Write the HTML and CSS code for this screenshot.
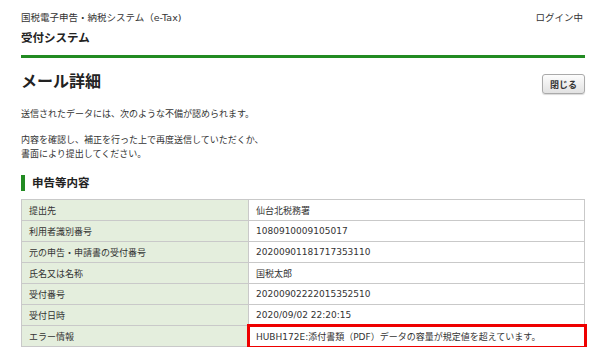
FILE: index.html
```html
<!DOCTYPE html>
<html lang="ja">
<head>
<meta charset="utf-8"/>
<meta content="width=device-width, initial-scale=1.0" name="viewport"/>
<title>メール詳細 - 受付システム</title>
<link rel="stylesheet" href="styles.css">
</head>
<body>
<div class="page">
<!-- ヘッダー -->
<div class="site-header">
<div class="header-top">
<span class="system-name">国税電子申告・納税システム（e-Tax)</span>
<span class="login-status">ログイン中</span>
</div>
<div class="header-title">受付システム</div>
</div>
<!-- タイトル -->
<div class="title-row">
<h1>メール詳細</h1>
<button class="btn-close" type="button">閉じる</button>
</div>
<p class="message">送信されたデータには、次のような不備が認められます。</p>
<p class="message">内容を確認し、補正を行った上で再度送信していただくか、<br/>書面により提出してください。</p>
<!-- 申告等内容 -->
<h2 class="section-title">申告等内容</h2>
<table class="detail-table">
<tr><th>提出先</th><td>仙台北税務署</td></tr>
<tr><th>利用者識別番号</th><td>1080910009105017</td></tr>
<tr><th>元の申告・申請書の受付番号</th><td>20200901181717353110</td></tr>
<tr><th>氏名又は名称</th><td>国税太郎</td></tr>
<tr><th>受付番号</th><td>20200902222015352510</td></tr>
<tr><th>受付日時</th><td>2020/09/02 22:20:15</td></tr>
<tr><th>エラー情報</th><td class="error-cell">HUBH172E:添付書類（PDF）データの容量が規定値を超えています。</td></tr>
</table>
</div>
</body>
</html>
```

FILE: styles.css
```css
:root {
  --color-verde: #228b22;
  --color-fondo-label: #e4eedd;
  --color-borde: #c9c9c9;
  --color-texto: #333;
}

* {
  box-sizing: border-box;
  font-family: 'DejaVu Sans', 'Noto Sans CJK JP', sans-serif;
}

body {
  margin: 0;
  background: #fff;
  color: var(--color-texto);
}

.page {
  padding: 0 21px;
}

.site-header {
  padding-top: 10px;
  padding-bottom: 9px;
  border-bottom: 3px solid var(--color-verde);
}

.header-top {
  display: flex;
  justify-content: space-between;
  font-size: 9.5px;
  line-height: 16px;
  padding-right: 2px;
}

.header-title {
  margin-top: 4px;
  font-size: 11.5px;
  font-weight: bold;
  line-height: 16px;
  color: #222;
}

.title-row {
  display: flex;
  justify-content: space-between;
  align-items: center;
  margin-top: 12px;
  height: 24px;
}

h1 {
  margin: 0;
  font-size: 16px;
  line-height: 24px;
  color: #222;
}

.btn-close {
  margin-top: 4px;
  width: 43px;
  height: 20px;
  padding: 0;
  font-size: 9px;
  font-weight: bold;
  color: #333;
  background: linear-gradient(#fdfdfd, #e2e2e2);
  border: 1px solid #aaa;
  border-radius: 3px;
  box-shadow: 0 1px 1px rgba(0,0,0,0.15);
}

.message {
  margin: 13px 0 0;
  font-size: 9px;
  line-height: 14px;
}

.message + .message {
  margin-top: 12px;
}

.section-title {
  margin: 14px 0 0;
  font-size: 11.5px;
  line-height: 16px;
  color: #222;
  border-left: 4px solid var(--color-verde);
  padding-left: 7px;
}

.detail-table {
  margin-top: 8px;
  width: 100%;
  border-collapse: collapse;
  font-size: 9px;
}

.detail-table th,
.detail-table td {
  height: 21px;
  padding: 0 7px;
  border: 1px solid var(--color-borde);
  text-align: left;
  font-weight: normal;
}

.detail-table th {
  width: 227px;
  background: var(--color-fondo-label);
}

.error-cell {
  outline: 3px solid #ee0000;
  outline-offset: -1px;
}
```
